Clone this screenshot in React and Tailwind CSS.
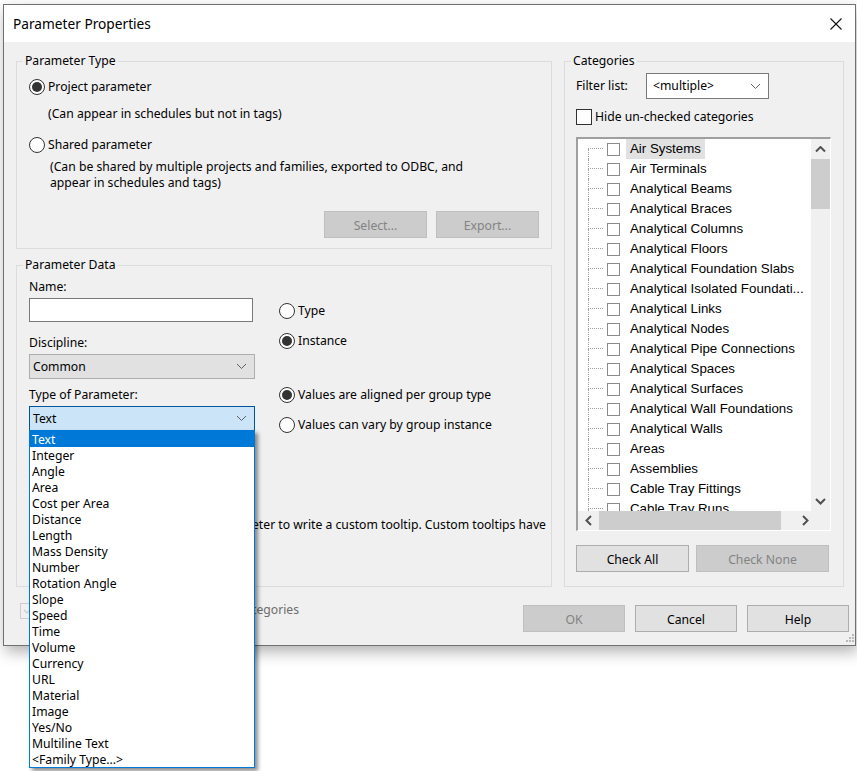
import React from 'react';

const categories = [
  'Air Systems', 'Air Terminals', 'Analytical Beams', 'Analytical Braces', 'Analytical Columns',
  'Analytical Floors', 'Analytical Foundation Slabs', 'Analytical Isolated Foundati...', 'Analytical Links',
  'Analytical Nodes', 'Analytical Pipe Connections', 'Analytical Spaces', 'Analytical Surfaces',
  'Analytical Wall Foundations', 'Analytical Walls', 'Areas', 'Assemblies', 'Cable Tray Fittings', 'Cable Tray Runs',
];

const paramTypes = [
  'Text', 'Integer', 'Angle', 'Area', 'Cost per Area', 'Distance', 'Length', 'Mass Density', 'Number',
  'Rotation Angle', 'Slope', 'Speed', 'Time', 'Volume', 'Currency', 'URL', 'Material', 'Image', 'Yes/No',
  'Multiline Text', '<Family Type...>',
];

const Chevron = ({ dir = 'down', bold = false }) => {
  const points = {
    down: '1,1 5.5,5.5 10,1',
    up: '1,5.5 5.5,1 10,5.5',
  };
  if (dir === 'left' || dir === 'right') {
    return (
      <svg width="7" height="11" viewBox="0 0 7 11" fill="none" stroke="#505050" strokeWidth="2">
        <polyline points={dir === 'left' ? '6,1 1.5,5.5 6,10' : '1,1 5.5,5.5 1,10'} />
      </svg>
    );
  }
  return (
    <svg width="11" height="7" viewBox="0 0 11 7" fill="none" stroke={bold ? '#505050' : '#606060'} strokeWidth={bold ? 2 : 1}>
      <polyline points={points[dir]} />
    </svg>
  );
};

const Radio = ({ label, checked = false, className = '' }) => (
  <div className={`flex items-center h-4 ${className}`}>
    <span className="w-4 h-4 rounded-full border border-[#333333] bg-white flex items-center justify-center shrink-0">
      {checked && <span className="w-[10px] h-[10px] rounded-full bg-[#333333]" />}
    </span>
    <span className="ml-[3px] whitespace-nowrap">{label}</span>
  </div>
);

const Button = ({ children, disabled = false, className = '' }) => (
  <div className={`h-[27px] pt-[2px] flex items-center justify-center border ${disabled ? 'bg-[#cccccc] border-[#bfbfbf] text-[#838383]' : 'bg-[#e1e1e1] border-[#adadad] text-black'} ${className}`}>
    {children}
  </div>
);

const Select = ({ value, className = '' }) => (
  <div className={`flex items-center justify-between pl-[3px] pr-[7px] border ${className}`}>
    <span>{value}</span>
    <Chevron />
  </div>
);

const TreeRow = ({ label, first, highlighted }) => (
  <div className="h-5 flex items-center shrink-0">
    <div className="w-[15px] h-5 flex flex-col ml-[10px] shrink-0">
      <div className={`h-[10px] border-b border-dotted border-b-[#a0a0a0] ${first ? '' : 'border-l border-dotted border-l-[#a0a0a0]'}`} />
      <div className="h-[10px] border-l border-dotted border-l-[#a0a0a0]" />
    </div>
    <span className="w-[13px] h-[13px] ml-[4px] border border-[#8a8a8a] bg-white shrink-0" />
    <span className={`ml-[6px] pl-[4px] pr-[4px] h-5 leading-5 whitespace-nowrap ${highlighted ? 'bg-[#e1e1e1]' : ''}`}>{label}</span>
  </div>
);

const Group = ({ title, className = '', children }) => (
  <fieldset className={`min-w-0 border border-[#dcdcdc] ${className}`}>
    <legend className="ml-[6px] px-[2px] h-4 leading-4">{title}</legend>
    {children}
  </fieldset>
);

export default function App() {
  return (
    <div className="relative w-[857px] h-[771px] overflow-hidden bg-white text-[12.2px] leading-4 text-black font-['Noto_Sans',sans-serif]">
      <div className="ml-[3px] mt-[4px] w-[853px] h-[642px] border border-[#707070] bg-[#f0f0f0] shadow-[2px_6px_14px_rgba(0,0,0,0.3)] flex flex-col relative">
        {/* Title bar */}
        <div className="h-[37px] bg-white flex items-center justify-between pl-[9px] pr-[13px] shrink-0">
          <span className="text-[13.7px]">Parameter Properties</span>
          <svg width="12" height="12" viewBox="0 0 12 12" stroke="#111111" strokeWidth="1.1">
            <line x1="0.5" y1="0.5" x2="11.5" y2="11.5" />
            <line x1="11.5" y1="0.5" x2="0.5" y2="11.5" />
          </svg>
        </div>

        {/* Body */}
        <div className="flex gap-3 pl-3 pt-[11px] shrink-0">
          <div className="w-[536px] flex flex-col gap-2">
            <Group title="Parameter Type" className="h-[196px]">
              <div className="px-3">
                <Radio label="Project parameter" checked className="mt-[10px]" />
                <p className="mt-[11px] ml-[19px]">(Can appear in schedules but not in tags)</p>
                <Radio label="Shared parameter" className="mt-[15px]" />
                <p className="mt-[6px] ml-[21px]">
                  (Can be shared by multiple projects and families, exported to ODBC, and<br />
                  appear in schedules and tags)
                </p>
                <div className="flex justify-end gap-[9px] mt-5">
                  <Button disabled className="w-[103px]">Select...</Button>
                  <Button disabled className="w-[103px]">Export...</Button>
                </div>
              </div>
            </Group>

            <Group title="Parameter Data" className="h-[330px]">
              <div className="px-3">
                <div className="flex">
                  <div className="w-[226px] shrink-0">
                    <div className="mt-[6px]">Name:</div>
                    <div className="mt-[3px] h-6 w-[224px] bg-white border border-[#7a7a7a]" />
                    <div className="mt-[13px]">Discipline:</div>
                    <Select value="Common" className="mt-[3px] h-[25px] bg-[#e1e1e1] border-[#adadad]" />
                    <div className="mt-[8px]">Type of Parameter:</div>
                    <Select value="Text" className="mt-[3px] h-[25px] bg-[#cce4f7] border-[#005499]" />
                  </div>
                  <div className="ml-[24px]">
                    <Radio label="Type" className="mt-[30px]" />
                    <Radio label="Instance" checked className="mt-[14px]" />
                    <Radio label="Values are aligned per group type" checked className="mt-[38px]" />
                    <Radio label="Values can vary by group instance" className="mt-[14px]" />
                  </div>
                </div>
                <p className="mt-[84px] ml-[223px] whitespace-nowrap">eter to write a custom tooltip. Custom tooltips have</p>
              </div>
            </Group>
          </div>

          <Group title="Categories" className="w-[280px] h-[534px]">
            <div className="pl-[11px]">
              <div className="flex items-center mt-1">
                <span className="w-[70px]">Filter list:</span>
                <Select value="<multiple>" className="w-[123px] h-[26px] pl-[6px] bg-white border-[#7a7a7a]" />
              </div>
              <div className="flex items-center mt-[10px] h-4">
                <span className="w-4 h-4 bg-white border border-[#333333] shrink-0" />
                <span className="ml-[3px]">Hide un-checked categories</span>
              </div>
              <div className="mt-3 w-[255px] h-[394px] flex flex-col border-t-2 border-l-2 border-t-[#a0a0a0] border-l-[#a0a0a0] border-r border-b border-r-white border-b-white">
                <div className="flex h-[372px]">
                  <div className="flex-1 bg-white overflow-hidden flex flex-col font-['Liberation_Sans',sans-serif] text-[13.3px]">
                    {categories.map((c, i) => (
                      <TreeRow key={c} label={c} first={i === 0} highlighted={i === 0} />
                    ))}
                  </div>
                  <div className="w-[19px] bg-[#f0f0f0] flex flex-col">
                    <div className="h-[20px] flex items-center justify-center"><Chevron dir="up" bold /></div>
                    <div className="h-[50px] bg-[#cdcdcd]" />
                    <div className="flex-1" />
                    <div className="h-[20px] flex items-center justify-center"><Chevron bold /></div>
                  </div>
                </div>
                <div className="flex-1 bg-[#f0f0f0] flex items-center">
                  <div className="w-[21px] flex justify-center"><Chevron dir="left" /></div>
                  <div className="w-[182px] h-full bg-[#cdcdcd]" />
                  <div className="flex-1 flex justify-center"><Chevron dir="right" /></div>
                </div>
              </div>
              <div className="flex gap-[7px] mt-[14px]">
                <Button className="w-[113px]">Check All</Button>
                <Button disabled className="w-[133px]">Check None</Button>
              </div>
            </div>
          </Group>
        </div>

        {/* Footer */}
        <div className="flex items-start justify-between mt-[15px] pl-4 pr-[6px]">
          <div className="flex items-center text-[#6d6d6d]">
            <span className="w-4 h-4 border border-[#cccccc] shrink-0 flex items-center justify-center">
              <svg width="10" height="10" viewBox="0 0 10 10" fill="none" stroke="#cccccc" strokeWidth="1.2">
                <polyline points="1,4 4,7 9,2" />
              </svg>
            </span>
            <span className="ml-[216px] pb-px">tegories</span>
          </div>
          <div className="flex gap-[10px] mt-[3px]">
            <Button disabled className="w-[102px]">OK</Button>
            <Button className="w-[102px]">Cancel</Button>
            <Button className="w-[102px]">Help</Button>
          </div>
        </div>

        {/* Resize grip */}
        <svg className="absolute right-0 bottom-0" width="11" height="11" viewBox="0 0 11 11" fill="#b8b8b8">
          <rect x="8" y="0" width="2" height="2" />
          <rect x="5" y="3" width="2" height="2" />
          <rect x="8" y="3" width="2" height="2" />
          <rect x="2" y="6" width="2" height="2" />
          <rect x="5" y="6" width="2" height="2" />
          <rect x="8" y="6" width="2" height="2" />
        </svg>
      </div>

      {/* Open dropdown */}
      <div className="absolute left-[29px] top-[430px] w-[226px] border border-[#0078d7] bg-white shadow-[3px_3px_4px_rgba(0,0,0,0.45)]">
        {paramTypes.map((t, i) => (
          <div key={t} className={`h-4 leading-[18px] pl-[2px] ${i === 0 ? 'bg-[#0078d7] text-white' : ''}`}>{t}</div>
        ))}
      </div>
    </div>
  );
}
